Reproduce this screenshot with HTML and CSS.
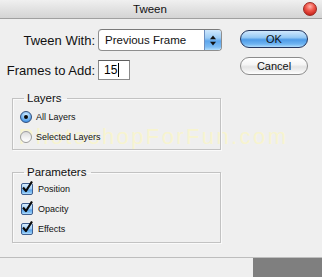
FILE: index.html
```html
<!DOCTYPE html>
<html>
<head>
<meta charset="utf-8">
<title>Tween</title>
<link rel="stylesheet" href="styles.css">
</head>
<body>
<div class="window">
  <div class="titlebar">
    <span class="title">Tween</span>
    <span class="close"></span>
  </div>
  <div class="watermark">PhotoshopForFun.com</div>
  <div class="main">
    <div class="left">
      <div class="row row-first">
        <span class="lbl">Tween With:</span>
        <div class="select">
          <span class="select-text">Previous Frame</span>
          <span class="select-arrows">
            <svg width="8" height="11" viewBox="0 0 8 11"><path d="M4 0.5 L7 4.2 L1 4.2 Z" fill="#111"/><path d="M4 10.5 L7 6.8 L1 6.8 Z" fill="#111"/></svg>
          </span>
        </div>
      </div>
      <div class="row row-second">
        <span class="lbl">Frames to Add:</span>
        <div class="input"><span>15</span><span class="caret"></span></div>
      </div>
      <fieldset class="group group-layers">
        <legend>Layers</legend>
        <div class="opt"><span class="radio radio-on"><span class="dot"></span></span><span>All Layers</span></div>
        <div class="opt"><span class="radio"></span><span>Selected Layers</span></div>
      </fieldset>
      <fieldset class="group group-params">
        <legend>Parameters</legend>
        <div class="opt"><span class="check"><svg width="14" height="14" viewBox="0 0 14 14"><path d="M3 6.5 L6 10 L12 0.5" fill="none" stroke="#0a0a0a" stroke-width="2.2" stroke-linejoin="round"/></svg></span><span>Position</span></div>
        <div class="opt"><span class="check"><svg width="14" height="14" viewBox="0 0 14 14"><path d="M3 6.5 L6 10 L12 0.5" fill="none" stroke="#0a0a0a" stroke-width="2.2" stroke-linejoin="round"/></svg></span><span>Opacity</span></div>
        <div class="opt"><span class="check"><svg width="14" height="14" viewBox="0 0 14 14"><path d="M3 6.5 L6 10 L12 0.5" fill="none" stroke="#0a0a0a" stroke-width="2.2" stroke-linejoin="round"/></svg></span><span>Effects</span></div>
      </fieldset>
    </div>
    <div class="right">
      <div class="btn btn-ok">OK</div>
      <div class="btn btn-cancel">Cancel</div>
    </div>
  </div>
  <div class="footer"><div class="footer-block"></div></div>
</div>
</body>
</html>
```

FILE: styles.css
```css
html, body {
  margin: 0;
  padding: 0;
  background: #efefef;
}
body {
  font-family: "Liberation Sans", Arial, sans-serif;
  color: #000;
}
.window {
  position: relative;
  width: 322px;
  height: 277px;
  overflow: hidden;
  background: #efefef;
}
.titlebar {
  height: 18px;
  border-bottom: 1px solid #a0a0a0;
  background: linear-gradient(to bottom, #f0f0f0 0%, #e2e2e2 50%, #d4d4d4 100%);
  display: flex;
  align-items: center;
}
.title {
  margin-left: 133px;
  font-size: 11.5px;
  color: #111;
}
.close {
  margin-left: auto;
  margin-right: 5px;
  width: 14px;
  height: 14px;
  box-sizing: border-box;
  border-radius: 50%;
  border: 1px solid #9a2a24;
  background: radial-gradient(circle at 50% 30%, #ffb0a8 0%, #f0584c 40%, #c8241c 80%, #e0483c 100%);
}
.watermark {
  position: absolute;
  left: 19px;
  top: 126px;
  font-size: 22px;
  line-height: 22px;
  letter-spacing: 2.4px;
  color: #f7f4cf;
  white-space: nowrap;
  z-index: 0;
}
.main {
  position: relative;
  z-index: 1;
  display: flex;
}
.left {
  width: 232px;
  padding-top: 10px;
}
.row {
  display: flex;
  align-items: center;
}
.row-first {
  height: 22px;
}
.row-second {
  height: 20px;
  margin-top: 9px;
}
.lbl {
  width: 95px;
  margin-right: 3px;
  text-align: right;
  font-size: 13px;
  white-space: nowrap;
  color: #111;
}
.select {
  width: 124px;
  height: 22px;
  box-sizing: border-box;
  border: 1px solid #8e8e8e;
  border-top-color: #7a7a7a;
  border-radius: 4px;
  background: #fff;
  display: flex;
  align-items: stretch;
  overflow: hidden;
}
.select-text {
  padding-left: 6px;
  font-size: 11.5px;
  display: flex;
  align-items: center;
  color: #111;
}
.select-arrows {
  margin-left: auto;
  width: 16px;
  border-left: 1px solid #6d8fc0;
  background: linear-gradient(to bottom, #cfe7fc 0%, #9bcbf5 40%, #5ea6ec 55%, #7ebdf4 85%, #b4defc 100%);
  display: flex;
  align-items: center;
  justify-content: center;
}
.select-arrows svg {
  display: block;
}
.input {
  width: 32px;
  height: 20px;
  box-sizing: border-box;
  border: 1px solid #8a8a8a;
  border-top-color: #5e5e5e;
  background: #fff;
  display: flex;
  align-items: center;
  padding-left: 5px;
  font-size: 12px;
}
.caret {
  width: 1px;
  height: 14px;
  margin-left: 1px;
  background: #000;
}
.group {
  margin: 0 0 0 12px;
  width: 209px;
  min-width: 0;
  box-sizing: border-box;
  border: 1px solid #c2c2c2;
  box-shadow: inset 1px 1px 0 #fafafa, 1px 1px 0 #fafafa;
  padding: 2px 4px 2px 7px;
}
.group legend {
  margin-left: 4px;
  padding: 0 5px 0 3px;
  font-size: 11.5px;
  line-height: 14px;
  color: #111;
}
.group-layers {
  margin-top: 11px;
}
.group-params {
  margin-top: 15px;
  padding-top: 0;
  padding-bottom: 3px;
}
.opt {
  height: 20px;
  display: flex;
  align-items: center;
  font-size: 9px;
  color: #111;
}
.radio {
  width: 12px;
  height: 12px;
  box-sizing: border-box;
  border-radius: 50%;
  border: 1px solid #9c9c9c;
  background: linear-gradient(to bottom, #dcdcdc 0%, #f4f4f4 60%, #ffffff 100%);
  margin-right: 4px;
  display: flex;
  align-items: center;
  justify-content: center;
}
.radio-on {
  border-color: #33507e;
  background: radial-gradient(circle at 50% 30%, #d6ecfd 0%, #86c0f4 45%, #3f8fe2 80%, #6cb2f2 100%);
}
.dot {
  width: 4px;
  height: 4px;
  border-radius: 50%;
  background: #0a0a0a;
}
.check {
  position: relative;
  width: 12px;
  height: 12px;
  box-sizing: border-box;
  margin-left: 1px;
  margin-right: 5px;
  border: 1px solid #3f5f90;
  border-radius: 2px;
  background: linear-gradient(to bottom, #d7edfd 0%, #a6d1f7 45%, #5ea6ec 60%, #8cc7f6 90%, #c0e3fd 100%);
}
.check svg {
  position: absolute;
  left: -2px;
  top: -3px;
  overflow: visible;
}
.right {
  padding-top: 11px;
  padding-left: 8px;
  display: flex;
  flex-direction: column;
}
.btn {
  width: 68px;
  height: 18px;
  box-sizing: border-box;
  border-radius: 9px;
  display: flex;
  align-items: center;
  justify-content: center;
  font-size: 11px;
  color: #111;
}
.btn-ok {
  border: 1px solid #24365f;
  background: linear-gradient(to bottom, #d0e8fd 0%, #97caf5 40%, #4e9be7 55%, #6fb4f1 82%, #b0dcfc 100%);
}
.btn-cancel {
  margin-top: 9px;
  border: 1px solid #8c8c8c;
  background: linear-gradient(to bottom, #ffffff 0%, #f6f6f6 40%, #e4e4e4 55%, #f2f2f2 82%, #ffffff 100%);
}
.footer {
  margin-top: 14px;
  border-top: 1px solid #bdbdbd;
  display: flex;
  justify-content: flex-end;
}
.footer-block {
  width: 69px;
  height: 19px;
  background: #7f7f7f;
}
```
